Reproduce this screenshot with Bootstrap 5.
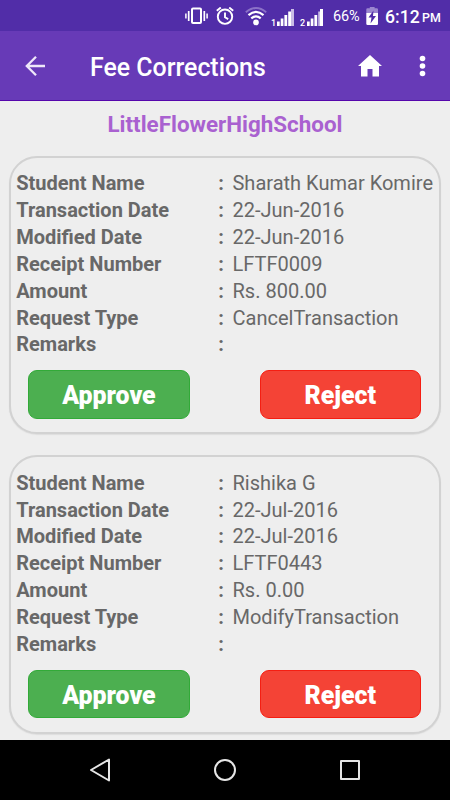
<!DOCTYPE html>
<html lang="en">
<head>
<meta charset="utf-8">
<meta name="viewport" content="width=device-width, initial-scale=1">
<title>Fee Corrections</title>
<link href="https://cdn.jsdelivr.net/npm/bootstrap@5.3.0/dist/css/bootstrap.min.css" rel="stylesheet">
<style>
body{font-family:Roboto,"Liberation Sans",sans-serif;background:#eee;height:800px;overflow:hidden;color:#686868}
svg{display:block;flex:none}
.status{height:31px;padding-top:2px;background:#512da8;color:#fff;padding-left:185px}
.status span{line-height:20px;white-space:nowrap}
.sim{width:6px;font-size:9px;font-weight:500;padding-top:12px}
.pct{width:33px;font-size:14.5px;letter-spacing:-.2px;margin-left:-1px}
.clock{width:37px;font-size:17.6px;font-weight:500;margin-left:-1px}
.ampm{font-size:12.4px;font-weight:500;padding-top:3px}
.appbar{height:70px;background:#673ab7;border-bottom:1px solid #5606ac;color:#fff;padding-left:25px}
.title{font-size:24.9px;font-weight:500;line-height:30px;margin:0 0 0 44px;width:280px;padding-top:4px}
.school{font-size:22.4px;font-weight:700;line-height:28px;color:#a961d0;padding-top:9px;margin:0}
.request{height:278.5px;margin:0 9px 21px;border:2px solid #d2d2d2;border-radius:28px;background:#eee;padding:12.8px 0 0 5.2px;box-shadow:0 1px 1px #ddd}
.request:first-of-type{margin-top:17.5px}
.line{height:26.85px;line-height:26.85px;font-size:20.02px;white-space:nowrap}
.line dt{width:202px;font-weight:700}
.line .sep{width:14.3px;font-weight:700}
.action{width:161.5px;height:48.5px;border-radius:9px;color:#fff!important;font-size:24.9px;font-weight:900;line-height:30px;padding:4px 0 0}
.approve,.approve:hover{background:#4caf50;border:1px solid #32aa38}
.reject,.reject:hover{background:#f44336;border:1px solid #f51e12}
.actions{padding:12px 18px 0 12px}
.content{height:639px;overflow:hidden}
.sysnav{height:60px;background:#000;gap:101px}
</style>
<script src="https://cdn.jsdelivr.net/npm/bootstrap@5.3.0/dist/js/bootstrap.bundle.min.js"></script>
</head>
<body>
<div class="status d-flex align-items-center">
  <svg class="me-2" width="23" height="20" viewBox="0 0 23 20" fill="none" stroke="#fff"><rect x="7" y="1.5" width="9" height="14.5" rx="1" stroke-width="2"/><path d="M3.7 4v10M19.3 4v10" stroke-width="1.7"/><path d="M.9 6.5v5M22.1 6.5v5" stroke-width="1.5"/></svg>
  <svg width="29" height="20" viewBox="0 0 29 20" fill="none" stroke="#fff" stroke-width="1.9"><circle cx="9" cy="9.7" r="7.2"/><path d="M9 5.5v4.7l3.2 1.9M.8 3.8 4.8.5M17.2 3.8l-4-3.3"/></svg>
  <svg width="26" height="20" viewBox="0 0 26 20" fill="none" stroke="#fff" stroke-width="2.2"><path d="M.8 5.3Q11 -3.2 21.2 5.3" stroke="#8b71c7" stroke-width="1.8"/><path d="M3.5 8.2Q11 1.7 18.5 8.2M6.3 11.4Q11 7.2 15.7 11.4"/><circle cx="11" cy="15.4" r="2.8" fill="#fff" stroke="none"/></svg>
  <span class="sim">1</span>
  <svg width="23" height="20" viewBox="0 0 23 20" fill="#fff"><path d="M0 14.5h2.7V19H0zM3.7 11.5h2.7V19H3.7zM7.4 8h2.8v11H7.4zM11.2 4.5h2.8V19h-2.8z"/><path d="M14 2h3v17h-3z" fill="#c9bce5"/></svg>
  <span class="sim">2</span>
  <svg width="28" height="20" viewBox="0 0 28 20" fill="#fff"><path d="M1 14.5h2.7V19H1zM4.7 11.5h2.7V19H4.7zM8.4 8h2.8v11H8.4z"/><path d="M12.2 4.5H14V19h-1.8z" fill="#c9bce5"/><path d="M14 2h3v17h-3z"/></svg>
  <span class="pct">66%</span>
  <svg width="20" height="20" viewBox="0 0 20 20"><path d="M.3 2.5q0-1.2 1.2-1.2h2.3V-.3h4.8v1.6h2.2q1.2 0 1.2 1.2V6H.3z" fill="#9b86cf"/><path d="M.3 6H12v10.8q0 1.2-1.2 1.2H1.5q-1.2 0-1.2-1.2z" fill="#fff"/><path d="m7.5 3.5-5 7h3l-1 6L10 9H7z" fill="#512da8"/></svg>
  <span class="clock">6:12</span><span class="ampm">PM</span>
</div>
<header class="appbar d-flex align-items-center">
  <svg width="21" height="22" viewBox="0 0 21 22" fill="none" stroke="#eee7f9" stroke-width="2.3"><path d="M20 11H2M11 1.8 1.8 11l9.2 9.2"/></svg>
  <h1 class="title">Fee Corrections</h1>
  <svg class="ms-auto" width="93" height="24" viewBox="0 0 93 24" fill="#fff"><path d="M13 1 1 12h3v10.5h6.5V15h5v7.5H22V12h3z"/><circle cx="65.5" cy="4.5" r="2.8"/><circle cx="65.5" cy="12" r="2.8"/><circle cx="65.5" cy="19.5" r="2.8"/></svg>
</header>
<main class="content">
  <h2 class="school text-center">LittleFlowerHighSchool</h2>
  <section class="request">
    <dl class="mb-0">
      <div class="line d-flex"><dt>Student Name</dt><span class="sep">:</span><dd>Sharath Kumar Komire</dd></div>
      <div class="line d-flex"><dt>Transaction Date</dt><span class="sep">:</span><dd>22-Jun-2016</dd></div>
      <div class="line d-flex"><dt>Modified Date</dt><span class="sep">:</span><dd>22-Jun-2016</dd></div>
      <div class="line d-flex"><dt>Receipt Number</dt><span class="sep">:</span><dd>LFTF0009</dd></div>
      <div class="line d-flex"><dt>Amount</dt><span class="sep">:</span><dd>Rs. 800.00</dd></div>
      <div class="line d-flex"><dt>Request Type</dt><span class="sep">:</span><dd>CancelTransaction</dd></div>
      <div class="line d-flex"><dt>Remarks</dt><span class="sep">:</span><dd></dd></div>
    </dl>
    <div class="actions d-flex justify-content-between"><button class="btn action approve">Approve</button><button class="btn action reject">Reject</button></div>
  </section>
  <section class="request">
    <dl class="mb-0">
      <div class="line d-flex"><dt>Student Name</dt><span class="sep">:</span><dd>Rishika G</dd></div>
      <div class="line d-flex"><dt>Transaction Date</dt><span class="sep">:</span><dd>22-Jul-2016</dd></div>
      <div class="line d-flex"><dt>Modified Date</dt><span class="sep">:</span><dd>22-Jul-2016</dd></div>
      <div class="line d-flex"><dt>Receipt Number</dt><span class="sep">:</span><dd>LFTF0443</dd></div>
      <div class="line d-flex"><dt>Amount</dt><span class="sep">:</span><dd>Rs. 0.00</dd></div>
      <div class="line d-flex"><dt>Request Type</dt><span class="sep">:</span><dd>ModifyTransaction</dd></div>
      <div class="line d-flex"><dt>Remarks</dt><span class="sep">:</span><dd></dd></div>
    </dl>
    <div class="actions d-flex justify-content-between"><button class="btn action approve">Approve</button><button class="btn action reject">Reject</button></div>
  </section>
</main>
<nav class="sysnav d-flex justify-content-center align-items-center">
  <svg width="24" height="26" viewBox="0 0 24 26" fill="none" stroke="#e6e6e6" stroke-width="2" stroke-linejoin="round"><path d="M21 2.5v21L3 13z"/></svg>
  <svg width="24" height="24" viewBox="0 0 24 24" fill="none" stroke="#e6e6e6" stroke-width="2"><circle cx="12" cy="12" r="10"/></svg>
  <svg width="24" height="24" viewBox="0 0 24 24" fill="none" stroke="#e6e6e6" stroke-width="2" stroke-linejoin="round"><path d="M3 3h18v18H3z"/></svg>
</nav>
</body>
</html>
